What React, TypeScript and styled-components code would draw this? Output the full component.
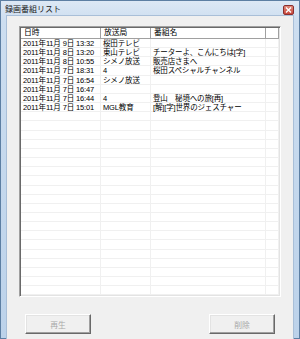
import React from "react";
import styled, { createGlobalStyle } from "styled-components";

const Global = createGlobalStyle`
  html, body { margin: 0; padding: 0; background: #fff; }
  body { font-family: "Noto Sans CJK JP", "Noto Sans", sans-serif; }
  * { box-sizing: border-box; }
`;

const FONT = `"Noto Sans CJK JP", "Noto Sans", sans-serif`;
const CELL_FONT = `"Liberation Sans", "Noto Sans CJK JP", sans-serif`;

const Window = styled.div`
  width: 300px;
  height: 339px;
  display: flex;
  flex-direction: column;
  border: 1px solid #5d7fa3;
  background: linear-gradient(180deg, #dde8f5 0px, #cddef0 20px, #bcd2ea 100%);
  font-family: ${FONT};
`;

const TitleBar = styled.div`
  height: 20px;
  display: flex;
  align-items: center;
  justify-content: space-between;
  padding: 2px 5px 0 4px;
`;

const Title = styled.span`
  font-size: 8px;
  color: #1a1a1a;
  line-height: 1;
`;

const CloseBtn = styled.div`
  width: 11px;
  height: 10px;
  margin-top: 2px;
  border-radius: 2px;
  border: 1px solid #8a2f2f;
  background: linear-gradient(180deg, #e08a7a, #c8463a);
  display: flex;
  align-items: center;
  justify-content: center;
`;

const Client = styled.div`
  flex: 1;
  margin: 0 5px 6px 5px;
  background: #f0f0f0;
  border: 1px solid #a9bfd8;
  padding: 10px 12px 10px 12px;
  display: flex;
  flex-direction: column;
`;

const ListView = styled.div`
  flex: 1;
  background: #fff;
  border-top: 1px solid #a0a0a0;
  border-left: 1px solid #a0a0a0;
  border-right: 1px solid #fff;
  border-bottom: 1px solid #fff;
  box-shadow: inset 1px 1px 0 #696969, inset -1px -1px 0 #e3e3e3;
  padding: 1px;
  display: flex;
  flex-direction: column;
  overflow: hidden;
`;

const COLS = "80px 50px 115px 1fr";

const Header = styled.div`
  display: grid;
  grid-template-columns: ${COLS};
  height: 11px;
  flex: none;
  border-bottom: 1px solid #a0a0a0;
  background: #fff;
`;

const HeaderCell = styled.div`
  font-family: ${CELL_FONT};
  font-size: 7.8px;
  line-height: 10px;
  color: #000;
  padding-left: 3px;
  border-right: 1px solid #a0a0a0;
  box-shadow: inset -1px 0 0 #fff;
  white-space: nowrap;
`;

const Body = styled.div`
  flex: 1;
  overflow: hidden;
`;

const Row = styled.div`
  display: grid;
  grid-template-columns: ${COLS};
  height: 9.17px;
  border-bottom: 1px solid #f0f0f0;
`;

const Cell = styled.div`
  font-family: ${CELL_FONT};
  font-size: 7.5px;
  line-height: 9px;
  color: #000;
  padding-left: 2px;
  border-right: 1px solid #f0f0f0;
  white-space: nowrap;
  letter-spacing: -0.15px;
`;

const ButtonRow = styled.div`
  display: flex;
  justify-content: space-between;
  margin-top: 17px;
  padding: 0 6px;
`;

const Button = styled.div`
  width: 66px;
  height: 20px;
  display: flex;
  align-items: center;
  justify-content: center;
  font-size: 7.8px;
  color: #a8a8a8;
  background: #f0f0f0;
  border-top: 1px solid #fff;
  border-left: 1px solid #fff;
  border-right: 1px solid #696969;
  border-bottom: 1px solid #696969;
  box-shadow: inset -1px -1px 0 #a0a0a0, inset 1px 1px 0 #e3e3e3;
`;

const data: [string, string, string][] = [
  ["2011年11月 9日 13:32", "桜田テレビ", ""],
  ["2011年11月 8日 13:20", "東山テレビ", "チーターよ、こんにちは[字]"],
  ["2011年11月 8日 10:55", "シメノ放送", "販売店さまへ"],
  ["2011年11月 7日 18:31", "4", "桜田スペシャルチャンネル"],
  ["2011年11月 7日 16:54", "シメノ放送", ""],
  ["2011年11月 7日 16:47", "", ""],
  ["2011年11月 7日 16:44", "4", "登山　秘境への旅[再]"],
  ["2011年11月 7日 15:01", "MGL教育", "[解][字]世界のジェスチャー"],
];

const rows: [string, string, string][] = [
  ...data,
  ...Array.from({ length: 20 }, () => ["", "", ""] as [string, string, string]),
];

export default function App() {
  return (
    <>
      <Global />
      <Window>
        <TitleBar>
          <Title>録画番組リスト</Title>
          <CloseBtn>
            <svg width="7" height="6" viewBox="0 0 7 6">
              <path d="M1 0.5 L6 5.5 M6 0.5 L1 5.5" stroke="#fff" strokeWidth="1.4" />
            </svg>
          </CloseBtn>
        </TitleBar>
        <Client>
          <ListView>
            <Header>
              <HeaderCell>日時</HeaderCell>
              <HeaderCell>放送局</HeaderCell>
              <HeaderCell>番組名</HeaderCell>
              <HeaderCell />
            </Header>
            <Body>
              {rows.map((r, i) => (
                <Row key={i}>
                  <Cell>{r[0]}</Cell>
                  <Cell>{r[1]}</Cell>
                  <Cell>{r[2]}</Cell>
                  <Cell />
                </Row>
              ))}
            </Body>
          </ListView>
          <ButtonRow>
            <Button>再生</Button>
            <Button>削除</Button>
          </ButtonRow>
        </Client>
      </Window>
    </>
  );
}
